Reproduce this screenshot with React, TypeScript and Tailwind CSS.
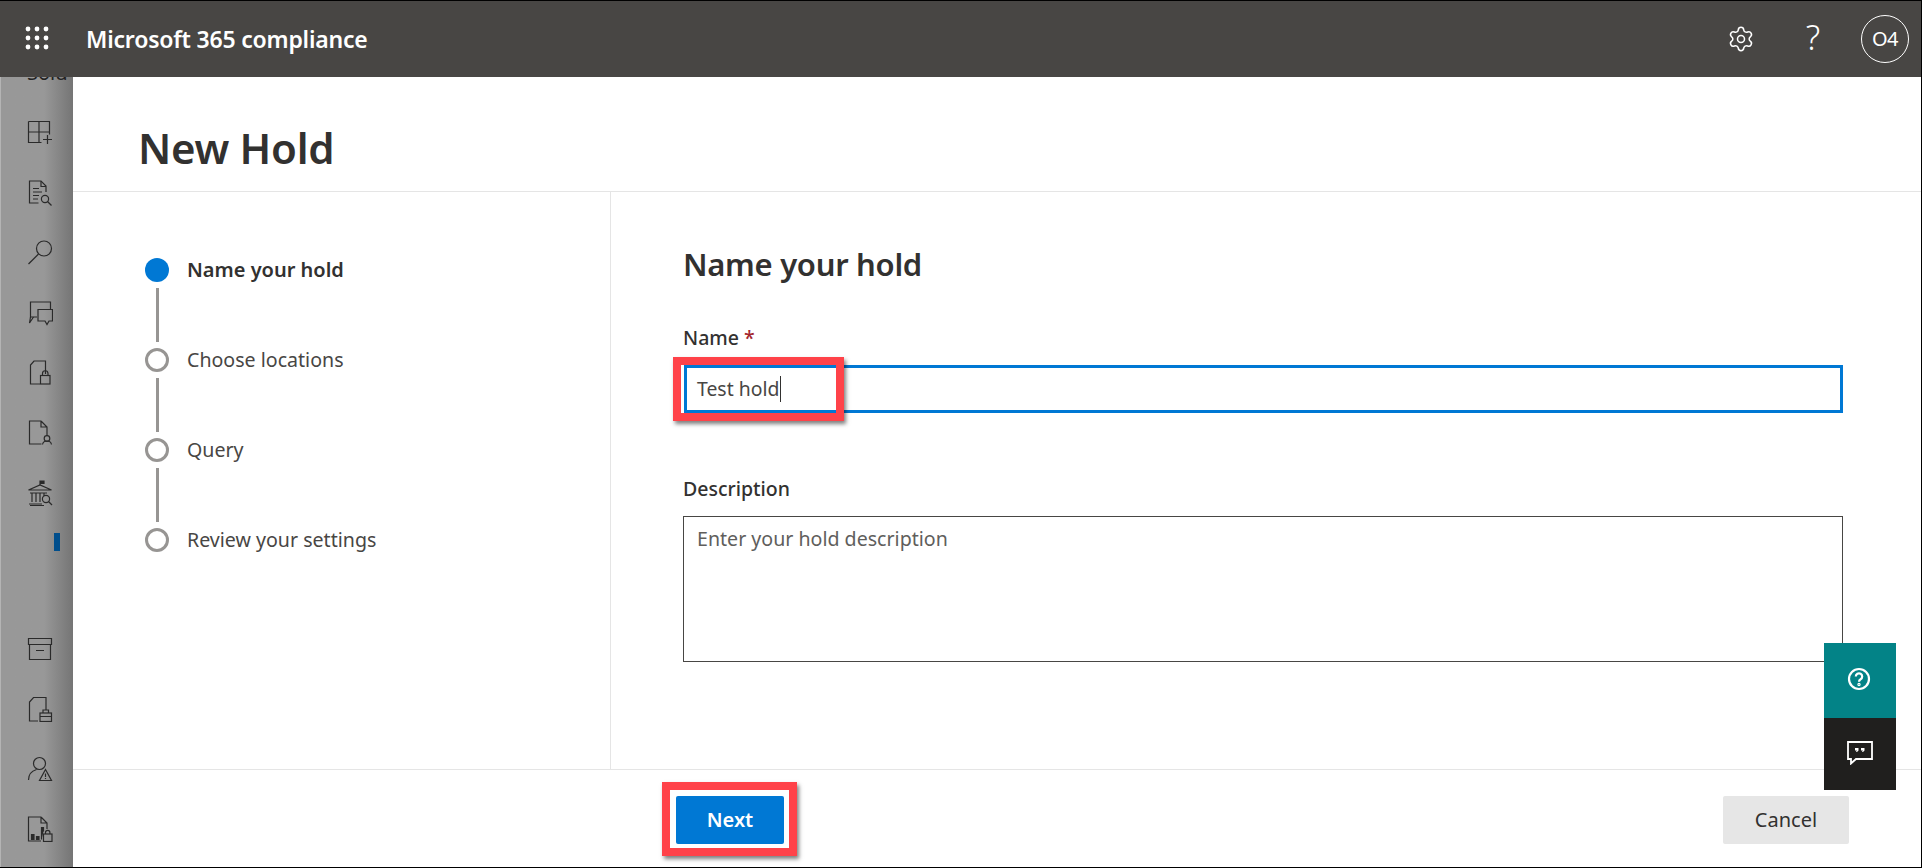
import React from 'react'
import { Settings } from 'lucide-react'

const font = { fontFamily: '"Noto Sans", "Open Sans", sans-serif' }

const steps = [
  { label: 'Name your hold', active: true },
  { label: 'Choose locations', active: false },
  { label: 'Query', active: false },
  { label: 'Review your settings', active: false },
]

// rail icons, drawn in a 26 box
const RailIcon: React.FC<{ children: React.ReactNode }> = ({ children }) => (
  <div className="h-[60px] flex items-center pl-[26px]">
    <svg width="26" height="26" viewBox="0 0 26 26" fill="none" stroke="#2a2a2a" strokeWidth="1.2">
      {children}
    </svg>
  </div>
)

const Waffle = () => (
  <svg width="24" height="24" viewBox="0 0 24 24" fill="#fff" className="-mt-[2px]">
    {[3, 12, 21].map((y) =>
      [3, 12, 21].map((x) => <circle key={`${x}-${y}`} cx={x} cy={y} r="2.4" />),
    )}
  </svg>
)

const Rail = () => (
  <div className="w-[73px] shrink-0 bg-gradient-to-r from-[#989898] from-60% to-[#757575] border-l border-[#b4b4b4] overflow-hidden">
    <div className="h-[26px] -mt-[17px] pl-[26px] text-[20px] leading-[26px] text-[#222]">Solu</div>
    <div className="mt-[17px]">
      <RailIcon>
        <path d="M1.500 1.500h21v13M1.500 1.500v21h13M1.500 12h21M12 1.500v21" />
        <path d="M16 19.500h9M20.500 15v9" />
      </RailIcon>
      <RailIcon>
        <path d="M19 12V6l-5-5H2.500v22h9" />
        <path d="M14 1v5.500h5M6 8.500h6M6 12h9M6 15.500h6M6 19h5" />
        <circle cx="18" cy="19" r="3.600" />
        <path d="M20.500 21.500l4 4" />
      </RailIcon>
      <RailIcon>
        <circle cx="17" cy="8.500" r="7.500" />
        <path d="M11.500 14L1.500 24" />
      </RailIcon>
      <RailIcon>
        <path d="M10 17H3.500V2h20v7" />
        <path d="M3.500 17l-1 6 4-6" />
        <path d="M11 9.500h14.500V21h-3.500l-2 3.500-2-3.500H11z" />
      </RailIcon>
      <RailIcon>
        <path d="M18.500 14V1H7L3.500 5v19H13" />
        <rect x="13.500" y="15.500" width="9.500" height="8.500" />
        <path d="M15.500 15.500v-2a2.700 2.700 0 0 1 5.500 0v2" />
      </RailIcon>
      <RailIcon>
        <path d="M14 1H2.500v23h12M14 1l6 6v9M14 1v6h6" />
        <circle cx="20" cy="18.500" r="2.800" />
        <path d="M15.500 24.500c.5-3 2-3.500 4.500-3.500s4 .5 4.500 3.500" />
      </RailIcon>
      <RailIcon>
        <path d="M13 5V1h4v2.500h-4" fill="#2a2a2a" />
        <path d="M1.500 10L13 5l11.500 5zM3 13h17M2 24h13M3 25.500h14M5 13v9M9 13v9M13 13v9M17 13v3" />
        <circle cx="19" cy="19" r="3.600" />
        <path d="M21.500 21.500l3.500 3.500" />
      </RailIcon>
    </div>
    <div className="ml-[53px] mt-[10px] h-[18px] w-[6px] bg-[#004e8c]" />
    <div className="mt-[68px]">
      <RailIcon>
        <path d="M1.500 2.500h23v6h-23zM2.500 8.500v15h21v-15M9 14.500h8" />
      </RailIcon>
      <RailIcon>
        <path d="M11 25H2.500V6L6.500 1.500H19V14" />
        <rect x="13" y="17" width="11.500" height="8.500" />
        <path d="M16 17v-3h5.500v3M13 20.500h11.500" />
      </RailIcon>
      <RailIcon>
        <circle cx="12.500" cy="7.500" r="6" />
        <path d="M1.500 24c0-5 3-9 8-10.500" />
        <path d="M18.500 13.500l6 11h-12zM18.500 17.500v3.500M18.500 22v1" />
      </RailIcon>
      <RailIcon>
        <path d="M14 1H1.500v24H14M14 1l6 6v6M14 1v6h6" />
        <path d="M4.500 23.500v-5h2.500v5zM9.500 23.500v-3h2.500v3z" fill="#2a2a2a" />
        <path d="M14.500 23.500V11.500h2v4" fill="#2a2a2a" />
        <rect x="16.500" y="18" width="8.500" height="7.500" />
        <path d="M18.500 18v-1.500a2.200 2.200 0 0 1 4.400 0V18" />
      </RailIcon>
    </div>
  </div>
)

export default function App() {
  return (
    <div
      className="relative h-[868px] w-full flex flex-col bg-white border-t border-r border-b border-black overflow-hidden"
      style={font}
    >
      {/* top bar */}
      <header className="h-[76px] shrink-0 flex items-center bg-[#484644] text-white">
        <div className="w-[86px] pl-[25px] flex items-center">
          <Waffle />
        </div>
        <span className="text-[23px] font-semibold tracking-[-0.2px]">Microsoft 365 compliance</span>
        <div className="ml-auto flex items-center">
          <Settings className="w-[28px] h-[28px]" strokeWidth={1.3} />
          <span className="ml-[49px] -mt-[4px] w-[18px] text-[34px] leading-none font-light text-center">?</span>
          <span className="ml-[39px] mr-[12px] w-[48px] h-[48px] rounded-full border border-white flex items-center justify-center text-[20px] tracking-[-0.5px]">
            O4
          </span>
        </div>
      </header>

      <div className="flex-1 flex min-h-0">
        <Rail />

        <main className="flex-1 flex flex-col min-w-0 text-[#323130]">
          <div className="h-[115px] shrink-0 border-b border-[#e5e5e5] pl-[65px] pt-[40px]">
            <h1 className="text-[42px] leading-[62px] font-semibold tracking-[-0.3px]">New Hold</h1>
          </div>

          <div className="flex-1 flex min-h-0">
            {/* steps */}
            <nav className="w-[538px] shrink-0 border-r border-[#e5e5e5] pl-[72px] pt-[66px]">
              {steps.map((step, i) => (
                <div key={step.label}>
                  <div className="flex items-center h-[24px]">
                    {step.active ? (
                      <span className="w-[24px] h-[24px] rounded-full bg-[#0078d4]" />
                    ) : (
                      <span className="w-[24px] h-[24px] rounded-full border-[3px] border-[#979593]" />
                    )}
                    <span
                      className={
                        step.active
                          ? 'ml-[18px] text-[20px] font-semibold'
                          : 'ml-[18px] text-[19.6px] text-[#484644]'
                      }
                    >
                      {step.label}
                    </span>
                  </div>
                  {i < steps.length - 1 && <div className="ml-[11px] my-[6px] h-[54px] w-[2.500px] bg-[#979593]" />}
                </div>
              ))}
            </nav>

            {/* form */}
            <section className="flex-1 pl-[72px] pr-[78px] pt-[52px]">
              <h2 className="text-[31px] leading-[40px] font-semibold tracking-[-0.3px]">Name your hold</h2>
              <label className="block mt-[41px] text-[19.500px] leading-[26px] font-medium">
                Name <span className="text-[#a4262c]">*</span>
              </label>
              <div className="mt-[14px] ml-px h-[48px] border-[3px] border-[#0078d4] flex items-center pl-[10px] text-[19.400px] text-[#484644]">
                Test hold<span className="ml-px w-px h-[26px] bg-[#323130]" />
              </div>
              <label className="block mt-[63px] text-[19.500px] leading-[26px] font-medium">Description</label>
              <div className="mt-[14px] h-[146px] border border-[#484644] pl-[13px] pt-[9px] text-[19.600px] leading-[26px] text-[#605e5c]">
                Enter your hold description
              </div>
            </section>
          </div>

          <footer className="h-[98px] shrink-0 border-t border-[#e5e5e5] flex items-start pt-[26px] pl-[603px] pr-[72px]">
            <button className="w-[108px] h-[48px] rounded-[2px] bg-[#0078d4] text-white text-[20px] font-semibold">
              Next
            </button>
            <button className="ml-auto w-[126px] h-[48px] rounded-[2px] bg-[#e6e6e6] text-[20px] text-[#323130]">
              Cancel
            </button>
          </footer>
        </main>
      </div>

      {/* floating help / feedback */}
      <div className="absolute left-[1824px] top-[642px] w-[72px]">
        <div className="h-[75px] bg-[#038387] flex items-center justify-center">
          <svg width="24" height="24" viewBox="0 0 24 24" fill="none" stroke="#fff" strokeWidth="2.200" className="mb-[3px] -ml-[3px]">
            <circle cx="12" cy="12" r="10" />
            <path d="M8.800 9.500a3.200 3.200 0 1 1 4.800 2.800c-1 .6-1.600 1.200-1.600 2.400" />
            <circle cx="12" cy="17.500" r=".6" />
          </svg>
        </div>
        <div className="h-[72px] bg-[#201f1e] flex items-center justify-center">
          <svg width="26" height="24" viewBox="0 0 26 24" fill="none" stroke="#fff" strokeWidth="1.800" className="-mt-[2px]">
            <path d="M1 1h24v17H9l-5 4.500V18H1z" />
            <path d="M8 7h3.500v2.500L10 11H9l.8-1.500H8zM14 7h3.500v2.500L16 11h-1l.8-1.500H14z" fill="#fff" stroke="none" />
          </svg>
        </div>
      </div>

      {/* red annotation boxes */}
      <div className="absolute left-[673px] top-[356px] w-[171px] h-[64px] border-[8px] border-[#ff4249] shadow-[2px_3px_4px_rgba(0,0,0,0.5)]" />
      <div className="absolute left-[662px] top-[781px] w-[135px] h-[74px] border-[8px] border-[#ff4249] shadow-[2px_3px_4px_rgba(0,0,0,0.5)]" />
    </div>
  )
}
